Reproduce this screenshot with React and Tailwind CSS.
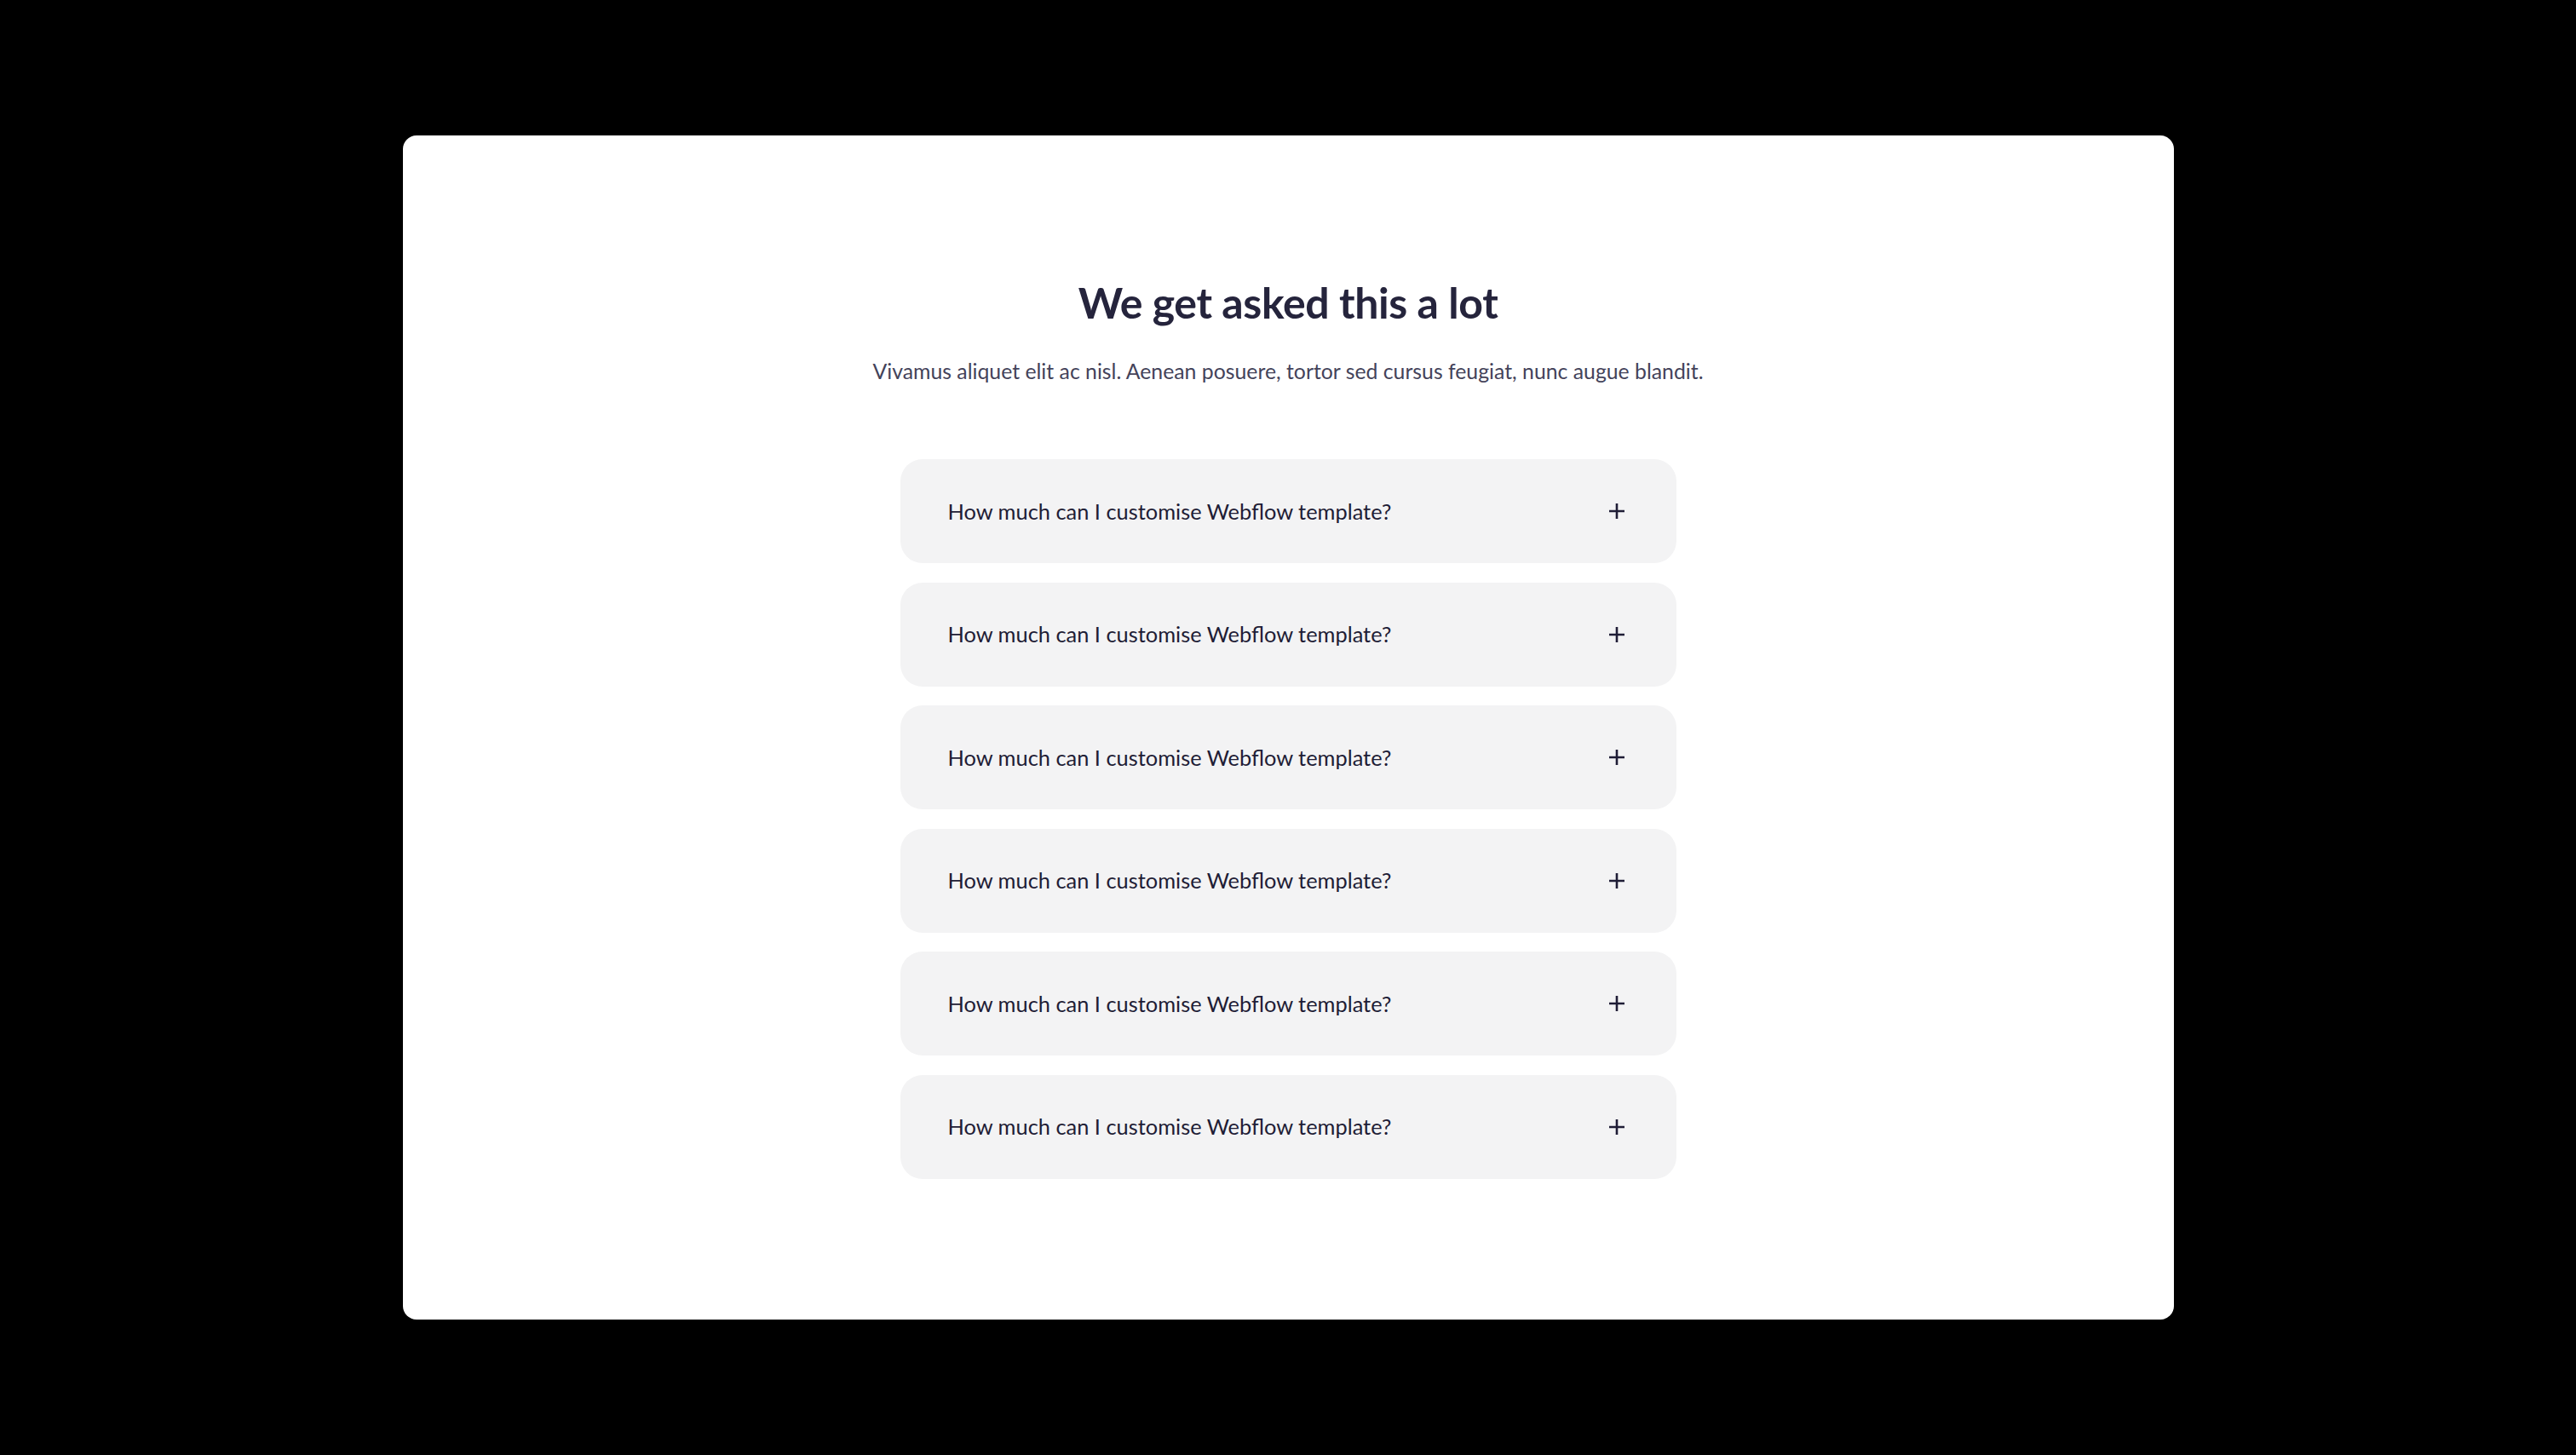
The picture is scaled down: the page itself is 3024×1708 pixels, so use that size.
import React from "react";

const questions = Array.from({ length: 6 }, () => "How much can I customise Webflow template?");

function PlusIcon() {
  return (
    <svg width="20" height="20" viewBox="0 0 20 20" fill="none" aria-hidden="true">
      <path d="M10 1v18M1 10h18" stroke="#1f1d36" strokeWidth="2.6" strokeLinecap="butt" />
    </svg>
  );
}

export default function App() {
  return (
    <div className="w-full h-[1708px] bg-black flex items-center justify-center">
      <section className="w-[2079px] h-[1390px] bg-white rounded-[16px] flex flex-col items-center pt-[162px]">
        <h2
          className="text-[50px] leading-[68px] font-bold text-[#25243c] tracking-[-0.4px]"
          style={{ fontFamily: "Lato, 'Noto Sans', sans-serif" }}
        >
          We get asked this a lot
        </h2>
        <p
          className="mt-[30px] text-[24.8px] leading-[34px] font-normal text-[#44435a]"
          style={{ fontFamily: "Lato, 'Noto Sans', sans-serif" }}
        >
          Vivamus aliquet elit ac nisl. Aenean posuere, tortor sed cursus feugiat, nunc augue blandit.
        </p>
        <div className="mt-[86px] w-[911px] flex flex-col gap-[22.5px]">
          {questions.map((q, i) => (
            <button
              key={i}
              className="h-[122px] w-full rounded-[26px] bg-[#f3f3f4] flex items-center justify-between pl-[56px] pr-[60px] text-left"
            >
              <span
                className="text-[25.4px] text-[#1f1d36]"
                style={{ fontFamily: "Lato, 'Noto Sans', sans-serif" }}
              >
                {q}
              </span>
              <PlusIcon />
            </button>
          ))}
        </div>
      </section>
    </div>
  );
}
